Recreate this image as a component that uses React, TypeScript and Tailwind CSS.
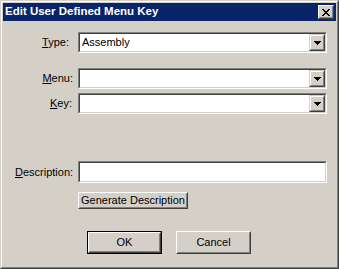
import React from "react";

const font = { fontFamily: '"Liberation Sans", Arial, sans-serif' };

function Sunken({ children, className = "" }: { children?: React.ReactNode; className?: string }) {
  return (
    <div className={"border border-t-[#808080] border-l-[#808080] border-b-white border-r-white " + className}>
      <div className="h-full border border-t-[#404040] border-l-[#404040] border-b-[#d4d0c8] border-r-[#d4d0c8] bg-white flex items-stretch">
        {children}
      </div>
    </div>
  );
}

function ArrowBtn() {
  return (
    <div className="w-[16px] border border-t-[#d4d0c8] border-l-[#d4d0c8] border-b-[#404040] border-r-[#404040]">
      <div className="h-full border border-t-white border-l-white border-b-[#808080] border-r-[#808080] bg-[#d4d0c8] flex items-center justify-center">
        <svg width="7" height="4" viewBox="0 0 7 4">
          <path d="M0 0h7v1H0zM1 1h5v1H1zM2 2h3v1H2zM3 3h1v1H3z" fill="#000" />
        </svg>
      </div>
    </div>
  );
}

function Combo({ value = "" }: { value?: string }) {
  return (
    <Sunken className="h-[21px] w-[249px]">
      <div className="flex-1 pl-[2px] text-[11px] leading-[17px] text-black">{value}</div>
      <ArrowBtn />
    </Sunken>
  );
}

function Button({ children, className = "", def = false }: { children: React.ReactNode; className?: string; def?: boolean }) {
  const inner = (
    <div className="h-full border border-t-white border-l-white border-b-[#404040] border-r-[#404040]">
      <div className="h-full border border-t-[#d4d0c8] border-l-[#d4d0c8] border-b-[#808080] border-r-[#808080] bg-[#d4d0c8] flex items-center justify-center text-[11px] text-black">
        {children}
      </div>
    </div>
  );
  return def ? <div className={"border border-black " + className}>{inner}</div> : <div className={className}>{inner}</div>;
}

export default function App() {
  return (
    <div style={font} className="w-[339px] h-[269px] border border-t-[#d4d0c8] border-l-[#d4d0c8] border-b-[#404040] border-r-[#404040]">
      <div className="h-full border border-t-white border-l-white border-b-[#808080] border-r-[#808080] bg-[#d4d0c8] p-px flex flex-col">
        <div className="h-[18px] bg-[#0a246a] flex items-center justify-between pl-[2px] pr-[2px]">
          <span className="text-white font-bold text-[11.5px] leading-none">Edit User Defined Menu Key</span>
          <div className="w-[16px] h-[14px] border border-t-white border-l-white border-b-[#404040] border-r-[#404040]">
            <div className="h-full border border-t-[#d4d0c8] border-l-[#d4d0c8] border-b-[#808080] border-r-[#808080] bg-[#d4d0c8] flex items-center justify-center">
              <svg width="8" height="7" viewBox="0 0 8 7">
                <path d="M0 0h2v1H0zM6 0h2v1H6zM1 1h2v1H1zM5 1h2v1H5zM2 2h4v1H2zM3 3h2v1H3zM2 4h4v1H2zM1 5h2v1H1zM5 5h2v1H5zM0 6h2v1H0zM6 6h2v1H6z" fill="#000" />
              </svg>
            </div>
          </div>
        </div>
        <div className="flex flex-col pl-[75px] pt-[11px] text-[11px] text-black">
          <div className="flex items-center h-[21px]">
            <span className="w-[75px] -ml-[75px] text-right pr-[9px]"><span className="underline">T</span>ype:</span>
            <Combo value="Assembly" />
          </div>
          <div className="flex items-center h-[21px] mt-[15px]">
            <span className="w-[75px] -ml-[75px] text-right pr-[5px]"><span className="underline">M</span>enu:</span>
            <Combo />
          </div>
          <div className="flex items-center h-[21px] mt-[4px]">
            <span className="w-[75px] -ml-[75px] text-right pr-[6px]"><span className="underline">K</span>ey:</span>
            <Combo />
          </div>
          <div className="flex items-center h-[22px] mt-[47px]">
            <span className="w-[75px] -ml-[75px] pl-[12px]"><span className="underline">D</span>escription:</span>
            <Sunken className="h-[22px] w-[249px]" />
          </div>
          <Button className="mt-[9px] w-[110px] h-[17px]">Generate Description</Button>
          <div className="flex gap-[14px] mt-[22px] ml-[9px]">
            <Button def className="w-[75px] h-[23px]">OK</Button>
            <Button className="w-[75px] h-[23px]">Cancel</Button>
          </div>
        </div>
      </div>
    </div>
  );
}
